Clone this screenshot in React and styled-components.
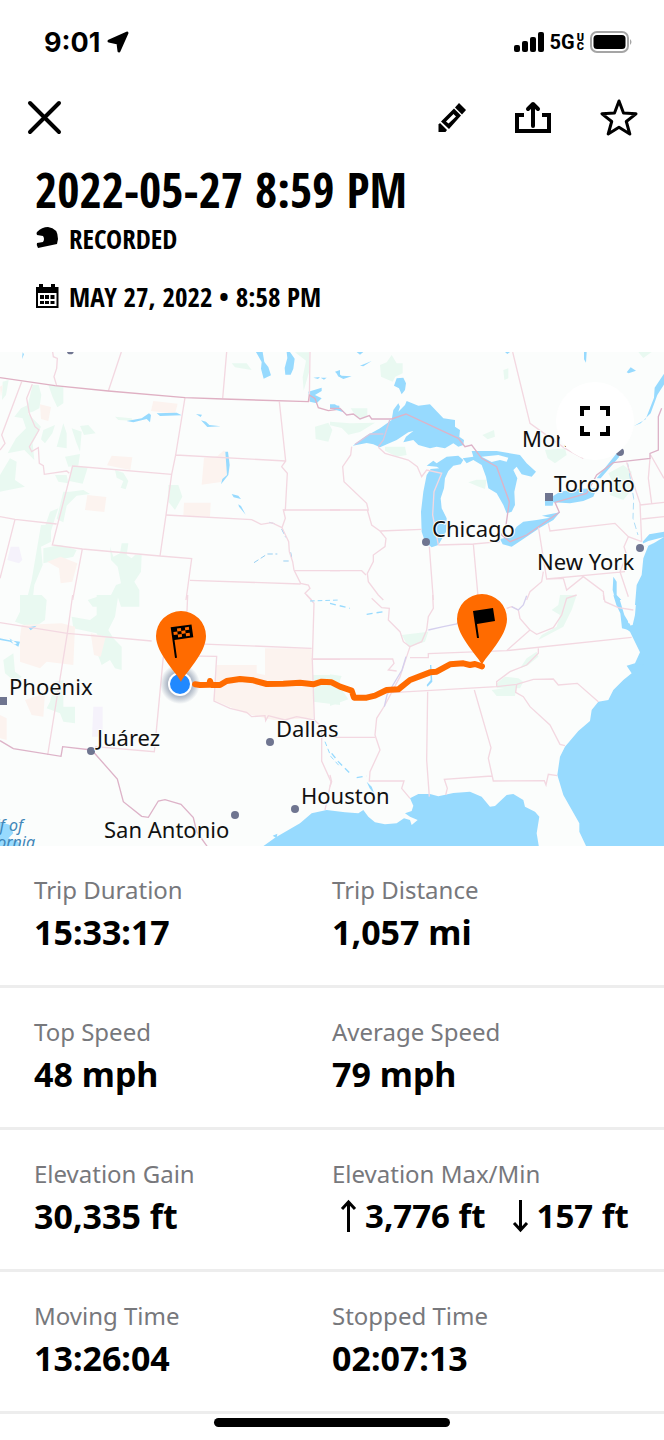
import styled, { createGlobalStyle } from 'styled-components';

const GlobalStyle = createGlobalStyle`
    *{
        box-sizing: border-box;
    }
    body{
        margin: 0;
        background-color: #FFF;
        color: #000;
        font-family: "Noto Sans", sans-serif;
    }
`
const StatusBar = styled.div`
    display: flex;
    align-items: center;
    justify-content: space-between;
    height: 84px;
    padding: 0 31px 0 44px;
    font-family: Inter, sans-serif;
`
const StatusGroup = styled.div`
    display: flex;
    align-items: center;
    gap: ${props => props.$gap};
`
const Clock = styled.span`
    font-size: 27px;
    font-weight: 700;
`
const Network = styled.span`
    font-family: Roboto, sans-serif;
    font-size: 20px;
    font-weight: 700;
`
const NetworkBand = styled.span`
    display: flex;
    flex-direction: column;
    font-family: Roboto, sans-serif;
    font-size: 11px;
    font-weight: 900;
    line-height: 9px;
`
const Toolbar = styled.nav`
    display: flex;
    align-items: center;
    justify-content: space-between;
    height: 68px;
    padding: 0 26px;
`
const ToolbarActions = styled.div`
    display: flex;
    align-items: center;
    gap: 48px;
`
const IconButton = styled.button`
    display: flex;
    padding: 0;
    border: none;
    background: none;
    color: #000;
    cursor: pointer;
`
const Header = styled.header`
    padding: 8px 35px 36px;
    font-family: "Noto Sans Condensed", "Open Sans Condensed", "Liberation Sans Narrow", sans-serif;
`
const Title = styled.h1`
    margin: 0;
    font-size: 48px;
    font-weight: 700;
    line-height: 60px;
`
const Meta = styled.p`
    display: flex;
    align-items: center;
    gap: 10px;
    margin: 0 0 20px;
    font-size: 27px;
    font-weight: 700;
    line-height: 38px;

    &:last-child{
        margin-bottom: 0;
    }
`
const MapContainer = styled.section`
    position: relative;
    width: 100%;
    aspect-ratio: 664 / 494;
    overflow: hidden;

    > svg{
        display: block;
        width: 100%;
        height: 100%;
    }
`
const CityName = styled.text`
    font-family: "Noto Sans", sans-serif;
    font-size: 22px;
    fill: #111;
    stroke: #FBFDFC;
    stroke-width: 2px;
    paint-order: stroke;
`
const SeaName = styled.text`
    font-family: "Noto Sans", sans-serif;
    font-size: 16px;
    font-style: italic;
    text-anchor: end;
    fill: #3F86B8;
`
const ExpandButton = styled.button`
    position: absolute;
    top: 30px;
    right: 30px;
    display: flex;
    align-items: center;
    justify-content: center;
    width: 78px;
    height: 78px;
    padding: 0;
    border: none;
    border-radius: 50%;
    background-color: #FFF;
    cursor: pointer;
`
const Stats = styled.dl`
    margin: 0;
`
const StatRow = styled.div`
    display: grid;
    grid-template-columns: 1fr 1fr;
    padding: 27px 0 28px;
    border-bottom: 3px solid #EDEDED;
`
const Stat = styled.div`
    &:first-child{
        padding-left: 34px;
    }
`
const StatLabel = styled.dt`
    color: #77787C;
    font-size: 24px;
    line-height: 34px;
`
const StatValue = styled.dd`
    display: flex;
    align-items: center;
    margin: 0;
    font-size: 34px;
    font-weight: 700;
    line-height: 50px;
    white-space: nowrap;
`
const Elevation = styled.span`
    display: flex;
    align-items: center;
    gap: 8px;
    padding-left: 8px;
    font-size: 33px;

    & + &{
        padding-left: 26px;
    }
`
const HomeIndicator = styled.div`
    width: 236px;
    height: 9px;
    margin: 4px auto 14px;
    border-radius: 5px;
    background-color: #000;
`

const stats = [
    [{ label: 'Trip Duration', value: '15:33:17' }, { label: 'Trip Distance', value: '1,057 mi' }],
    [{ label: 'Top Speed', value: '48 mph' }, { label: 'Average Speed', value: '79 mph' }],
    [{ label: 'Elevation Gain', value: '30,335 ft' }, { label: 'Elevation Max/Min', max: '3,776 ft', min: '157 ft' }],
    [{ label: 'Moving Time', value: '13:26:04' }, { label: 'Stopped Time', value: '02:07:13' }],
]

const cities = [
    { name: 'Chicago', x: 432, y: 185, dotX: 426, dotY: 190 },
    { name: 'Toronto', x: 554, y: 140, dotX: 549, dotY: 145, capital: true },
    { name: 'New York', x: 537, y: 218, dotX: 640, dotY: 196 },
    { name: 'Montreal', x: 522, y: 95, dotX: 620, dotY: 100 },
    { name: 'Phoenix', x: 9, y: 343, dotX: 3, dotY: 349, capital: true },
    { name: 'Juárez', x: 97, y: 394, dotX: 91, dotY: 399 },
    { name: 'Dallas', x: 276, y: 385, dotX: 270, dotY: 390 },
    { name: 'Houston', x: 301, y: 452, dotX: 295, dotY: 457 },
    { name: 'San Antonio', x: 104, y: 486, dotX: 235, dotY: 463 },
]

function StatusIcons(){
    return (
        <StatusGroup $gap="6px">
            <svg width="30" height="20" viewBox="0 0 30 20">
                <rect x="0" y="13" width="6" height="7" rx="2" />
                <rect x="8" y="9" width="6" height="11" rx="2" />
                <rect x="16" y="5" width="6" height="15" rx="2" />
                <rect x="24" y="0" width="6" height="20" rx="2" />
            </svg>
            <StatusGroup $gap="2px">
                <Network>5G</Network>
                <NetworkBand><span>U</span><span>C</span></NetworkBand>
            </StatusGroup>
            <svg width="43" height="22" viewBox="0 0 43 22">
                <rect x="1" y="1" width="37" height="20" rx="6" fill="none" stroke="#A5A5A5" strokeWidth="2" />
                <rect x="3.5" y="4" width="32" height="14" rx="3.5" />
                <path d="M40 8q3 3 0 6z" fill="#A5A5A5" />
            </svg>
        </StatusGroup>
    )
}

function Terrain(){
    return (
        <g transform="scale(.33333)">
            <g transform="translate(0 -21)">
                <path fill="#E9F9F1" d="M98 120l18 0 8 30-6 40-20 10-15 5 40 40-25 50 5 50-30-30-50 10 25-45 30-30-10-30-25-5 20-25 20-10zM145 120l45 5 0 50-18 12-14-30zM8 110l18-5-8 45-12 15zM0 390l30-50 20 10-5 55 30 20-50 10-25 5zM130 255l35-15-8 25-22 30-12-12zM190 235l10 30 0 45-30-5zM215 250l30 10-5 60-12-30zM240 243l25-3 22 25-35 5zM195 335l45-8-5 35-30 3zM215 360l48 8-15 48-40-8zM345 375l25 8 15 25-8 25-15-5 8-20-20-10zM190 440l20 0 40-5 20 12-40 5-30 30-10 50-20-10zM150 500l25-10-10 30-22 70-20-10zM123 540h30v50l-30 15 5 55-25 60-5 45h-18l15-60zM130 610l50-10 50 15-10 20-90 20zM330 605l10 30 20-10 5-30h20l-5 35 15 10 10-10h20l-2 50-20 30 15 25v50h-55l-10-30-15 10v20h-60l-15-20 45-15 25 0 15-30 15-5-10-50-20-20zM505 420l30 0 12 35-22 40-20-25zM945 245l40-12 12 22-12 35-38-8zM695 55l45 0 15 20-50-8zM885 22h42v60l-16 55-3-40 10-50zM345 215l50 5 5 8-45-3zM165 390l35 0 5 25-30-5z" />
                <path fill="#FCF3EF" d="M120 178l33 8-8 42-22-6zM460 168l73 8-8 30-72-8zM335 332l62 5-6 38-70-14zM262 450l57 6-6 45-58-6zM612 338l40-4 20-18 16 20v45l-25 30-58 8zM552 473l80 0-2 42-80-3zM142 650l40-15 50 20-15 55-35 5-5-45zM0 125l8-5-5 35z" />
                <path fill="#F5F2FB" d="M32 605l25 0 10 40-10 10-35-10z" />
                <path fill="#97DAFE" d="M768 21l20 0 5 30 12 15 8 25-22 10-8-30 2-20zM860 21h10l14 20-4 30-8 18h-16l-2-20 8-30zM380 228l45-8 22-15 6 5-3 22-10-10-40 10zM470 205l60-2 15 8-65 2zM588 207l18 2-4 7zM603 226l15 4 10 10 34 4-40 2zM676 320l8 0 5 40-4 30-22 28 4-16 14-12zM695 447l20 5 8 10-22-5zM715 478l8 5 14 26-20-24zM925 140l40-12 0 10-20 12 20 10-15 15-20-5zM1005 80l15-5v22zM993 180l25 2v10l-14-2zM940 98l20-2-6 6zM962 98l18 0-8 6zM68 22l4 6-6 14z" />
                <path fill="none" stroke="#97CFF2" strokeWidth="3" strokeDasharray="16 8" d="M762 653L802 627L832 627M850 648l20 0M845 552l12 25M872 622l4 20M808 532l20 5" />
                <g fill="none" stroke="#F3D8E1" strokeWidth="4">
                    <path d="M158 21L160 35L172 40L170 70L162 95L170 122M364 21L325 138M680 21L668 160M930 21L928 170M65 110L5 270L15 295L0 315M97 118L80 160L88 205L105 245L117 255L88 305L95 320L115 308L118 355L130 362L133 388L200 378L208 385" />
                    <path d="M515 388L218 363L157 600L247 612L480 633L575 641L558 765M555 158L527 330L515 388L498 510L480 633M527 330L857 348M838 170L857 348L845 365L862 385L856 495L850 495L856 520L846 548L866 590L868 620L878 650L882 675L902 715L925 720L930 730L915 745L935 765" />
                    <path d="M498 510L755 524L783 538L815 533L846 548M850 495H1020M882 677H1020M570 706L902 717M0 515L45 523L170 537M45 523L0 700M247 612L218 765" />
                </g>
                <path fill="none" stroke="#DFB0C3" strokeWidth="4" d="M0 98L165 122L325 138L555 158L670 162L925 170L928 150L945 160L955 188L985 197L1020 192" />
                <ellipse cx="211" cy="20" rx="10" ry="8" fill="#6F7590" />
            </g>

            <g transform="translate(990 -21)">
                <path fill="#E9F9F1" d="M150 60l20-8 15-22 15 25 18 0v30l-22 10-8 15-35-15zM62 190h50v25l-30 5zM0 230l60 5 75-2-45 28-35 8-20-20-35-8zM165 305h60l5 25-30 5-35-18zM415 412l25-8 30 0-5 28-22-8zM645 315l60-5 5 20-35 25-22-15zM835 385l45-25 25 20-5 60-20 25-40-15 10-35zM457 270l35-15 3 20-22 8zM520 75l15-5v30l-12 5zM925 21h40l-25 18z" />
                <path fill="#97DAFE" d="M68 302L110 272L150 250L185 225L190 195L205 175L210 185L205 200L225 180L230 168L265 182L300 178L340 220L375 225L375 245L390 255L388 275L402 285L400 300L385 305L370 295L345 310L320 305L300 310L265 300L250 285L220 292L228 275L250 258L235 262L200 285L150 307L130 298L110 294zM192 122L200 100L220 98L228 115L225 135L215 148L207 130z" />
                <path fill="#97DAFE" d="M290 362L310 347L320 355L350 335L385 332L400 345L392 358L370 362L355 378L345 400L342 430L332 460L335 490L350 520L348 560L325 600L305 607L285 590L275 560L273 500L280 440L290 390L302 372L328 370L320 365z" />
                <path fill="#97DAFE" d="M398 340L430 335L425 318L500 318L570 330L590 355L618 380L605 395L575 388L560 365L550 375L562 400L553 440L555 480L545 500L530 505L520 480L500 445L475 430L468 395L455 360L430 345L410 355z" />
                <path fill="#FBFDFC" d="M455 335l50-5 30 8-5 12-20-5-25 6z" />
                <path fill="#97DAFE" d="M510 582L540 575L560 545L580 530L620 525L660 518L636 512L690 502L670 525L630 548L590 575L545 605L518 598zM645 468L690 440L740 432L800 430L790 455L760 468L720 475L670 472L668 482L645 482z" />
                <path fill="#97DAFE" d="M800 400L860 325L868 335L812 400zM912 243l35-20 25-65 2-30 30-45v32l-22 35-20 55-30 30zM762 21h8l-2 32-6-10zM890 82l12-15 16 10-22 8zM20 82l15 10 30 2-25 8-16-8zM90 62l35-14-25 16zM0 178l15 0 30 25-45-14zM525 21h15l-8 6zM80 21h20l-10 8zM850 695l10 15 0 40 14 15h-18l-8-30zM938 590l20-22 44-8v25l-60 20z" />
                <path fill="#97DAFE" d="M1002 578L955 602L940 640L935 690L920 720L915 780H1002z" />
                <path fill="#FBFDFC" d="M930 600l25-12 47-12-30 18-28 12z" />
                <path fill="none" stroke="#AEDDF7" strokeWidth="3" strokeDasharray="20 10" d="M893 355l8 45 10 60-2 60 15 50" />
                <g fill="none" stroke="#F3D8E1" strokeWidth="4">
                    <path d="M548 21L600 235L705 310L760 340M65 305L62 330L38 365L42 410L110 475L115 495H0M112 495L125 540L150 558L168 580L165 605L130 630L130 650L112 685L115 710L145 750L160 765M0 677H95L108 690M150 558L275 553" />
                    <path d="M145 307L165 325L235 345L262 365L275 395L290 375L335 385L312 440L308 510L325 600M325 600L430 597L510 590M298 605L310 765M430 597L445 765M655 535L660 558L855 535L895 575L935 590M625 545L650 702L885 680M895 575L882 605L890 630L870 680L895 755M640 680L635 710L600 740L590 765M650 702L700 700L710 735L760 695L820 740L822 765" />
                    <path d="M890 352L930 475L935 590M960 340L955 400L965 475M930 480L1002 472M935 522L1002 515M962 330L1002 400" />
                </g>
                <path fill="none" stroke="#DDB3C8" strokeWidth="4" d="M0 190L30 190L50 210L70 207L90 222L118 212L125 222L185 222L228 207L385 280L405 305L425 300L455 340L500 365L538 470L528 540L515 570L540 590L590 570L688 502L675 472L770 445L800 390L850 353L960 340L960 325L985 315L985 215L995 190" />
                <path fill="none" stroke="#D9C6DD" strokeWidth="4" d="M145 305L160 285L180 222M75 298L120 267H160" />
            </g>

            <g transform="translate(0 729)">
                <path fill="#E9F9F1" d="M60 0h65l15 15-5 60-35 25-55-20 15-30zM10 195l30-20 5 55 20 15-20 15-30-25zM215 65l55 10 20-15 0-60h65l-10 65-20 40 15 25 25 25v70l-20-5-15-25-25 15-15-40 10-30-10-25-70-15zM150 320l15-60 25-5 0 80 35 0v50l-35-5-10-25-40-15zM925 240l75 0 20 15v75l-80-10-25-20 35-25zM395 0h22v25l-12-5z" />
                <path fill="#FCF3EF" d="M65 90l120-5 40 10-5 115-80-10-20 20-60-20 0-75zM75 315l60-20-5 70-35-5zM0 360l20 10v65l-20-5zM272 115l45 10-15 60-20-5zM650 210l120 0v25l25 5v-80h140l5 210-120 5-85-20-95-40z" />
                <path fill="#F5F2FB" d="M280 335h28v90h-32z" />
                <path fill="#97DAFE" d="M0 130l25 5 35 5-5 15-25-15-30-5zM85 97l25-5-18 14zM0 680l30 10 10 25-15 15 30 10 5 15H0zM28 130l15 20 8-5z" />
                <g fill="none" stroke="#F3D8E1" strokeWidth="4">
                    <path d="M218 0L202 115L143 480M0 83L202 115L455 138M563 0L557 145L935 160M490 185L463 470L285 455M490 182L650 184L642 318L690 340L740 352L755 365L795 362L797 377L805 362L855 375L890 365L943 375M920 0L942 25L937 195L943 375M935 193H1020M943 375L965 395V498L993 560L975 645" />
                </g>
                <path fill="none" stroke="#DDB3C8" strokeWidth="4" d="M0 437L40 461L183 484L188 455L275 465L352 552L370 620L425 664L445 667L475 618L495 614L543 628L580 668L590 710L622 755" />
                <path fill="none" stroke="#97DAFE" strokeWidth="3" strokeDasharray="14 9" d="M930 18l90-3M975 440l18 45 27 30" />
            </g>

            <g transform="translate(990 729)">
                <path fill="#E9F9F1" d="M215 120l80-10-10 30-50 15zM690 0h50l-15 45-25 50-75 40 10-15 45-25 10-35-25-15 20-15zM500 265l25-20 40 5 15 10-10 20-70 0zM590 190l30-20 5 15-30 25-25 10zM485 285l75-10-5 28-55 0zM0 238l35 5-10 25 30 45-55 20z" />
                <path fill="#97DAFE" d="M920 0L915 60L908 90L880 95L900 110L930 172L915 205L890 212L905 235L880 255L850 285L835 315L805 320L785 345L780 378L745 408L705 455L690 485L682 540L700 600L748 685L748 710L770 757H1002V0z" />
                <path fill="#97DAFE" d="M-205 757L-165 728L-90 685L-55 655L-10 645L45 652L85 655L100 645L115 665L135 682L165 688L200 685L222 670L240 675L245 690L263 675L240 665L225 655L245 648L250 632L240 610L265 597L300 597L325 604L370 594L420 590L455 605L480 635L495 633L530 600L550 597L580 615L585 635L615 650L628 665L620 715L627 757z" />
                <path fill="#97DAFE" d="M850 0l18 10 15 50 18 30-5 15-20-5-5-45-12-25zM290 270l12-15-2-45 4 0 3 50-15 15zM110 560l15 15 10 25-16-20zM-172 722l14-6-2 14z" />
                <path fill="#FBFDFC" d="M905 30l-15 15 5 40 12-5z" />
                <g fill="none" stroke="#F3D8E1" strokeWidth="4">
                    <path d="M125 10L155 38L178 40L175 75L210 110L220 140L240 155L225 200L210 245L165 330L140 370L135 420L150 465L120 530L118 558H222L215 580L240 610M-55 192H188L192 205L175 225L200 228M240 155L275 140L290 105L295 65L310 40L308 0M240 188H295V176L530 167L905 127M530 167L600 105L570 70L565 45L545 35L530 40M600 105L620 118L670 98L695 60L710 10L740 0M185 293L500 275L560 268L610 253L670 252L685 270L742 265L805 320" />
                    <path d="M293 290L290 495L298 605M433 285L483 458L475 490L490 558L643 557L648 570L655 538L682 542M485 543L343 553L352 580L347 600M500 275V260L540 230L590 210L625 175V160M560 268L557 292L580 305L600 335L660 390L690 448L705 452M0 427H135M0 540L5 560L0 575M820 0L825 20L865 38L910 45" />
                </g>
                <path fill="none" stroke="#D5D0EE" strokeWidth="4" d="M228 185l-12 40-45 75-8 35M295 105l45-10 40-8 25-30M545 35l20 10 15-15 10-28" />
                <path fill="none" stroke="#97DAFE" strokeWidth="4" strokeDasharray="18 12" d="M0 25l60 15M110 58l50-8M5 475l20 25 35 35M80 548l30-5M900 215l40-5" />
            </g>
        </g>
    )
}

function Pin({ x, y, children }){
    return (
        <g transform={`translate(${x} ${y})`}>
            <path fill="#FF6B00" d="M0 46C-3 38-25 18-25 0A25 25 0 0 1 25 0C25 18 3 38 0 46z" />
            {children}
        </g>
    )
}

function TripMap(){
    return (
        <MapContainer>
            <svg viewBox="0 0 664 494" preserveAspectRatio="xMidYMid slice" role="img" aria-label="Trip map">
                <defs>
                    <radialGradient id="halo">
                        <stop offset=".6" stopColor="#8F9CB0" stopOpacity=".75" />
                        <stop offset="1" stopColor="#8F9CB0" stopOpacity="0" />
                    </radialGradient>
                </defs>
                <rect width="664" height="494" fill="#FBFDFC" />
                <Terrain />
                {cities.map(city => (
                    <g key={city.name}>
                        {city.capital
                            ? <rect x={city.dotX - 4} y={city.dotY - 4} width="8" height="8" fill="#6F7590" />
                            : <circle cx={city.dotX} cy={city.dotY} r="4" fill="#6F7590" />}
                        <CityName x={city.x} y={city.y}>{city.name}</CityName>
                    </g>
                ))}
                <SeaName x="23" y="479">Gulf of</SeaName>
                <SeaName x="35" y="496">California</SeaName>
                <circle cx="180" cy="332" r="20" fill="url(#halo)" />
                <path
                    transform="translate(0 243) scale(.33333)"
                    fill="none"
                    stroke="#FF6B00"
                    strokeWidth="18"
                    strokeLinecap="round"
                    strokeLinejoin="round"
                    d="M585 268L600 270L628 269L630 258L634 270L660 270L680 258L720 252L760 256L800 267L850 266L900 263L940 268L965 260L995 262L1020 275L1055 287L1062 308L1100 308L1125 302L1160 285L1195 283L1230 255L1290 232L1310 230L1350 208L1390 205L1410 210L1425 207L1446 214"
                />
                <circle cx="180" cy="332" r="12" fill="#FFF" />
                <circle cx="180" cy="332" r="10" fill="#2189FF" />
                <Pin x={181} y={284}>
                    <g transform="rotate(-8)">
                        <path d="M-9-10h21v13H-7v18h-2z" />
                        <path fill="#FF6B00" d="M-3-8h4v3h-4zM5-8h4v3H5zM-7-5h4v3h-4zM1-5h4v3H1zM-3-2h4v3h-4zM5-2h4v3H5z" />
                    </g>
                </Pin>
                <Pin x={482} y={267}>
                    <path d="M-9-8L11-11L13 2L-5 5L-3 19L-5 19z" />
                </Pin>
            </svg>
            <ExpandButton aria-label="Expand map">
                <svg width="30" height="30" viewBox="0 0 30 30" fill="none" stroke="#000" strokeWidth="4">
                    <path d="M2 10V2H10M20 2H28V10M28 20V28H20M10 28H2V20" />
                </svg>
            </ExpandButton>
        </MapContainer>
    )
}

export default function App(){
    return (
        <>
            <GlobalStyle />
            <StatusBar>
                <StatusGroup $gap="7px">
                    <Clock>9:01</Clock>
                    <svg width="22" height="22" viewBox="0 0 22 22" stroke="#000" strokeWidth="3" strokeLinejoin="round">
                        <path d="M2 10L20 2L12 20L11 12z" />
                    </svg>
                </StatusGroup>
                <StatusIcons />
            </StatusBar>

            <Toolbar>
                <IconButton aria-label="Close">
                    <svg width="37" height="37" viewBox="0 0 37 37" fill="none" stroke="#000" strokeWidth="4" strokeLinecap="round">
                        <path d="M4 3L33 32M33 3L4 32" />
                    </svg>
                </IconButton>
                <ToolbarActions>
                    <IconButton aria-label="Edit">
                        <svg width="28" height="30" viewBox="0 0 28 30">
                            <path d="M21 0L28 7L24 11.500L17 4.500z" />
                            <path fillRule="evenodd" d="M16 5.500L23 12.500L11 26L3 18.500zM15.500 11L8 18.500L10.500 20.500L18 13.500z" />
                            <path d="M2 20L9 27L7.500 29H0.500V21.500z" />
                        </svg>
                    </IconButton>
                    <IconButton aria-label="Share">
                        <svg width="38" height="34" viewBox="0 0 38 34" fill="none" stroke="#000" strokeWidth="4">
                            <path d="M10 14H3V30H35V14H28" />
                            <path d="M19 25V3M14 8L19 3L24 8" strokeLinecap="round" strokeLinejoin="round" />
                        </svg>
                    </IconButton>
                    <IconButton aria-label="Add to favourites">
                        <svg width="38" height="38" viewBox="0 0 38 38" fill="none" stroke="#000" strokeWidth="3" strokeLinejoin="round">
                            <path d="M19 2L23.500 14L36 14.800L26.300 22.500L29.800 35L19 28.200L8.200 35L11.700 22.500L2 14.800L14.500 14z" />
                        </svg>
                    </IconButton>
                </ToolbarActions>
            </Toolbar>

            <Header>
                <Title>2022-05-27 8:59 PM</Title>
                <Meta>
                    <svg width="24" height="24" viewBox="0 0 24 24">
                        <path d="M2 5Q7 0 13 0Q23 1 23 12L22 17L3 21Q1 18 2 16L8 15Q10 12 8 9L2 8Q1 6 2 5z" />
                    </svg>
                    RECORDED
                </Meta>
                <Meta>
                    <svg width="24" height="26" viewBox="0 0 24 26">
                        <path fillRule="evenodd" d="M1 3H4V0H8V3H16V0H20V3H23.500V24H1zM3 9V22H21.500V9z" />
                        <path d="M5 11h4v4H5zM10 11h4v4h-4zM15.500 11h4v4h-4zM5 17h4v3H5zM10 17h4v3h-4zM15.500 17h4v3h-4z" />
                    </svg>
                    MAY 27, 2022 • 8:58 PM
                </Meta>
            </Header>

            <TripMap />

            <Stats>
                {stats.map((row, id) => (
                    <StatRow key={id}>
                        {row.map(stat => (
                            <Stat key={stat.label}>
                                <StatLabel>{stat.label}</StatLabel>
                                {stat.value
                                    ? <StatValue>{stat.value}</StatValue>
                                    : (
                                        <StatValue>
                                            <Elevation>
                                                <svg width="17" height="34" viewBox="0 0 17 34" fill="none" stroke="#000" strokeWidth="3">
                                                    <path d="M8.500 33V3M2 10L8.500 3L15 10" />
                                                </svg>
                                                {stat.max}
                                            </Elevation>
                                            <Elevation>
                                                <svg width="17" height="34" viewBox="0 0 17 34" fill="none" stroke="#000" strokeWidth="3">
                                                    <path d="M8.500 1V31M2 24L8.500 31L15 24" />
                                                </svg>
                                                {stat.min}
                                            </Elevation>
                                        </StatValue>
                                    )}
                            </Stat>
                        ))}
                    </StatRow>
                ))}
            </Stats>
            <HomeIndicator />
        </>
    )
}
